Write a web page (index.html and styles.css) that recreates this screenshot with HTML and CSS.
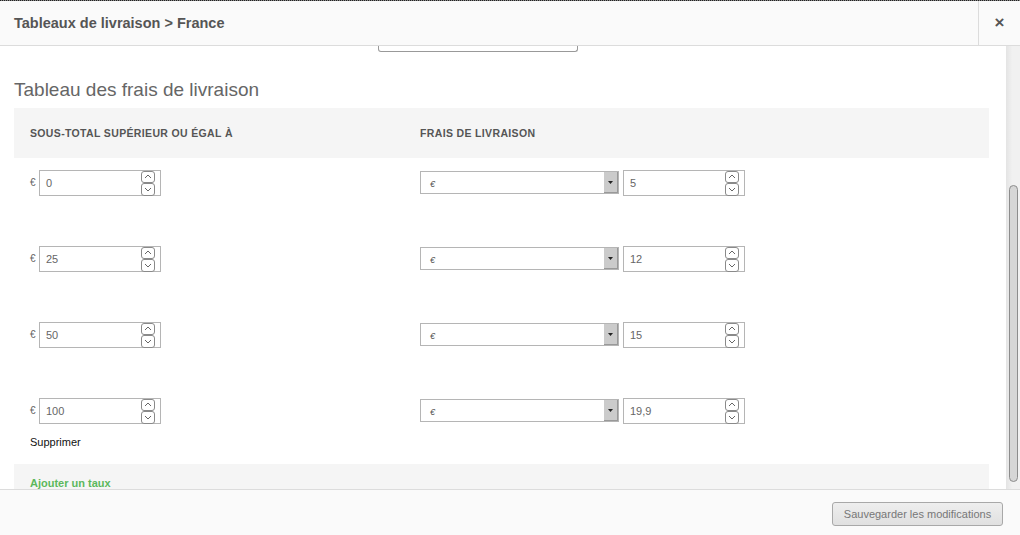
FILE: index.html
```html
<!DOCTYPE html>
<html lang="fr">
<head>
<meta charset="utf-8">
<title>Tableaux de livraison</title>
<link rel="stylesheet" href="styles.css">
</head>
<body>
<div class="modal">
  <div class="topline"></div>
  <header class="modal-header">
    <h1 class="modal-title">Tableaux de livraison &gt; France</h1>
    <div class="close">×</div>
  </header>
  <div class="modal-main">
    <div class="modal-body">
      <div class="cut-select"></div>
      <h2 class="section-title">Tableau des frais de livraison</h2>
      <div class="rate-table">
        <div class="rate-head">
          <div>Sous-total supérieur ou égal à</div>
          <div>Frais de livraison</div>
        </div>

        <div class="rate-row">
          <div class="cell-min">
            <div class="min-line">
              <span class="cur">€</span>
              <div class="num-input"><span class="val">0</span><span class="spin"><span class="spin-up"><svg width="8" height="5" viewBox="0 0 8 5"><path d="M1 4 L4 1 L7 4" fill="none" stroke="#666" stroke-width="1"/></svg></span><span class="spin-down"><svg width="8" height="5" viewBox="0 0 8 5"><path d="M1 1 L4 4 L7 1" fill="none" stroke="#666" stroke-width="1"/></svg></span></span></div>
            </div>
          </div>
          <div class="cell-fee">
            <div class="select"><span class="sel-val">€</span><span class="sel-btn"><svg width="5" height="3" viewBox="0 0 5 3"><path d="M0 0 H5 L2.5 3 Z" fill="#222"/></svg></span></div>
            <div class="num-input"><span class="val">5</span><span class="spin"><span class="spin-up"><svg width="8" height="5" viewBox="0 0 8 5"><path d="M1 4 L4 1 L7 4" fill="none" stroke="#666" stroke-width="1"/></svg></span><span class="spin-down"><svg width="8" height="5" viewBox="0 0 8 5"><path d="M1 1 L4 4 L7 1" fill="none" stroke="#666" stroke-width="1"/></svg></span></span></div>
          </div>
        </div>

        <div class="rate-row">
          <div class="cell-min">
            <div class="min-line">
              <span class="cur">€</span>
              <div class="num-input"><span class="val">25</span><span class="spin"><span class="spin-up"><svg width="8" height="5" viewBox="0 0 8 5"><path d="M1 4 L4 1 L7 4" fill="none" stroke="#666" stroke-width="1"/></svg></span><span class="spin-down"><svg width="8" height="5" viewBox="0 0 8 5"><path d="M1 1 L4 4 L7 1" fill="none" stroke="#666" stroke-width="1"/></svg></span></span></div>
            </div>
          </div>
          <div class="cell-fee">
            <div class="select"><span class="sel-val">€</span><span class="sel-btn"><svg width="5" height="3" viewBox="0 0 5 3"><path d="M0 0 H5 L2.5 3 Z" fill="#222"/></svg></span></div>
            <div class="num-input"><span class="val">12</span><span class="spin"><span class="spin-up"><svg width="8" height="5" viewBox="0 0 8 5"><path d="M1 4 L4 1 L7 4" fill="none" stroke="#666" stroke-width="1"/></svg></span><span class="spin-down"><svg width="8" height="5" viewBox="0 0 8 5"><path d="M1 1 L4 4 L7 1" fill="none" stroke="#666" stroke-width="1"/></svg></span></span></div>
          </div>
        </div>

        <div class="rate-row">
          <div class="cell-min">
            <div class="min-line">
              <span class="cur">€</span>
              <div class="num-input"><span class="val">50</span><span class="spin"><span class="spin-up"><svg width="8" height="5" viewBox="0 0 8 5"><path d="M1 4 L4 1 L7 4" fill="none" stroke="#666" stroke-width="1"/></svg></span><span class="spin-down"><svg width="8" height="5" viewBox="0 0 8 5"><path d="M1 1 L4 4 L7 1" fill="none" stroke="#666" stroke-width="1"/></svg></span></span></div>
            </div>
          </div>
          <div class="cell-fee">
            <div class="select"><span class="sel-val">€</span><span class="sel-btn"><svg width="5" height="3" viewBox="0 0 5 3"><path d="M0 0 H5 L2.5 3 Z" fill="#222"/></svg></span></div>
            <div class="num-input"><span class="val">15</span><span class="spin"><span class="spin-up"><svg width="8" height="5" viewBox="0 0 8 5"><path d="M1 4 L4 1 L7 4" fill="none" stroke="#666" stroke-width="1"/></svg></span><span class="spin-down"><svg width="8" height="5" viewBox="0 0 8 5"><path d="M1 1 L4 4 L7 1" fill="none" stroke="#666" stroke-width="1"/></svg></span></span></div>
          </div>
        </div>

        <div class="rate-row last">
          <div class="cell-min">
            <div class="min-line">
              <span class="cur">€</span>
              <div class="num-input"><span class="val">100</span><span class="spin"><span class="spin-up"><svg width="8" height="5" viewBox="0 0 8 5"><path d="M1 4 L4 1 L7 4" fill="none" stroke="#666" stroke-width="1"/></svg></span><span class="spin-down"><svg width="8" height="5" viewBox="0 0 8 5"><path d="M1 1 L4 4 L7 1" fill="none" stroke="#666" stroke-width="1"/></svg></span></span></div>
            </div>
            <div class="delete">Supprimer</div>
          </div>
          <div class="cell-fee">
            <div class="select"><span class="sel-val">€</span><span class="sel-btn"><svg width="5" height="3" viewBox="0 0 5 3"><path d="M0 0 H5 L2.5 3 Z" fill="#222"/></svg></span></div>
            <div class="num-input"><span class="val">19,9</span><span class="spin"><span class="spin-up"><svg width="8" height="5" viewBox="0 0 8 5"><path d="M1 4 L4 1 L7 4" fill="none" stroke="#666" stroke-width="1"/></svg></span><span class="spin-down"><svg width="8" height="5" viewBox="0 0 8 5"><path d="M1 1 L4 4 L7 1" fill="none" stroke="#666" stroke-width="1"/></svg></span></span></div>
          </div>
        </div>

        <div class="rate-foot"><span class="add">Ajouter un taux</span></div>
      </div>
    </div>
    <div class="scrollbar"><div class="thumb"></div></div>
  </div>
  <footer class="modal-footer">
    <div class="save">Sauvegarder les modifications</div>
  </footer>
</div>
</body>
</html>
```

FILE: styles.css
```css
* { box-sizing: border-box; }
html, body { margin: 0; padding: 0; }
body {
  width: 1020px;
  height: 535px;
  overflow: hidden;
  font-family: "Liberation Sans", Arial, sans-serif;
  background: #fff;
}
.modal {
  display: flex;
  flex-direction: column;
  height: 535px;
}
.topline {
  height: 1px;
  flex: none;
  background: repeating-linear-gradient(90deg, #222 0 1px, #888 1px 2px);
}
.modal-header {
  flex: none;
  height: 45px;
  display: flex;
  align-items: stretch;
  background: #fafafa;
  border-bottom: 1px solid #dcdcdc;
}
.modal-title {
  flex: 1;
  margin: 0;
  padding-left: 14px;
  font-size: 14.5px;
  font-weight: bold;
  color: #555;
  line-height: 44px;
}
.close {
  width: 42px;
  border-left: 1px solid #dcdcdc;
  text-align: center;
  font-size: 17px;
  font-weight: bold;
  color: #555;
  line-height: 44px;
}
.modal-main {
  flex: none;
  height: 443px;
  display: flex;
}
.modal-body {
  flex: 1;
  overflow: hidden;
  padding: 0 17px 0 14px;
}
.cut-select {
  margin-left: 364px;
  width: 200px;
  height: 6px;
  border: 1px solid #999;
  border-top: none;
  border-radius: 0 0 3px 3px;
}
.section-title {
  margin: 27px 0 7px;
  font-size: 19px;
  line-height: 22px;
  font-weight: normal;
  color: #666;
}
.rate-head {
  display: grid;
  grid-template-columns: 390px 1fr;
  padding: 0 16px;
  height: 50px;
  align-items: center;
  background: #f5f5f5;
  font-size: 10.5px;
  letter-spacing: 0.35px;
  font-weight: bold;
  text-transform: uppercase;
  color: #555;
}
.rate-row {
  display: grid;
  grid-template-columns: 390px 1fr;
  padding: 12px 16px 0;
  height: 76px;
}
.rate-row.last {
  height: 78px;
}
.min-line {
  display: flex;
  align-items: center;
  gap: 3px;
}
.cur {
  font-size: 10px;
  color: #666;
  width: 6px;
  margin-top: -2px;
}
.num-input {
  width: 122px;
  height: 26px;
  border: 1px solid #b5b5b5;
  display: flex;
  align-items: center;
  padding: 0 5px 0 6px;
  font-size: 11px;
  color: #666;
  background: #fff;
}
.val { flex: 1; }
.spin {
  display: flex;
  flex-direction: column;
  width: 14px;
}
.spin-up, .spin-down {
  display: flex;
  align-items: center;
  justify-content: center;
  border: 1px solid #8a8a8a;
  border-radius: 3px;
  background: #fff;
}
.spin-up { height: 12px; }
.spin-down { height: 13px; }
.delete {
  margin-top: 11px;
  font-size: 11px;
  line-height: 14px;
  color: #111;
}
.cell-fee {
  display: flex;
  align-items: flex-start;
  gap: 4px;
}
.select {
  margin-top: 1px;
  width: 199px;
  height: 23px;
  border: 1px solid #b5b5b5;
  display: flex;
  align-items: stretch;
  background: #fff;
}
.sel-val {
  flex: 1;
  padding-left: 9px;
  font-size: 9px;
  font-style: italic;
  color: #555;
  display: flex;
  align-items: center;
  padding-top: 2px;
}
.sel-btn {
  width: 14px;
  background: #cbcbcb;
  border-right: 1px solid #999;
  border-bottom: 1px solid #999;
  display: flex;
  align-items: center;
  justify-content: center;
}
.rate-foot {
  background: #f5f5f5;
  padding: 13px 16px 0;
  height: 40px;
}
.add {
  display: block;
  font-size: 11px;
  line-height: 12px;
  font-weight: bold;
  color: #5cb85c;
}
.scrollbar {
  flex: none;
  width: 14px;
  background: linear-gradient(90deg, #e4e4e4, #f1f1f1 45%, #f1f1f1);
  padding: 139px 2px 0 3px;
}
.thumb {
  width: 9px;
  height: 297px;
  border: 1px solid #8c8c8c;
  border-radius: 5px;
  background: #d6d6d6;
}
.modal-footer {
  flex: none;
  height: 46px;
  border-top: 1px solid #dcdcdc;
  background: #fafafa;
  display: flex;
  justify-content: flex-end;
  align-items: flex-start;
  padding: 12px 17px 0 0;
}
.save {
  width: 171px;
  height: 24px;
  border: 1px solid #a8a8a8;
  border-radius: 3px;
  background: linear-gradient(#eeeeee, #e0e0e0);
  font-size: 11px;
  line-height: 22px;
  text-align: center;
  color: #777;
}
```
